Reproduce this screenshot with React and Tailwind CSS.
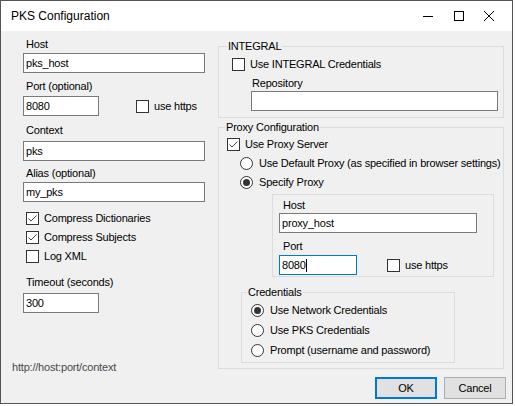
import React from 'react';

function Check({ checked }) {
  return (
    <span className="w-[13px] h-[13px] shrink-0 border border-[#333] bg-white flex items-center justify-center">
      {checked && (
        <svg width="11" height="11" viewBox="0 0 11 11">
          <path d="M1.5 5.5 L4 8 L9.5 2.5" stroke="#444" strokeWidth="1" fill="none" />
        </svg>
      )}
    </span>
  );
}

function Radio({ checked }) {
  return (
    <span className="w-[13px] h-[13px] shrink-0 rounded-full border border-[#333] bg-white flex items-center justify-center">
      {checked && <span className="w-[7px] h-[7px] rounded-full bg-[#333]" />}
    </span>
  );
}

function CheckRow({ label, checked, className = '' }) {
  return (
    <div className={`flex items-center gap-[5px] ${className}`}>
      <Check checked={checked} />
      <span className="whitespace-nowrap">{label}</span>
    </div>
  );
}

function RadioRow({ label, checked, className = '' }) {
  return (
    <div className={`flex items-center gap-[6px] ${className}`}>
      <Radio checked={checked} />
      <span className="whitespace-nowrap">{label}</span>
    </div>
  );
}

function Label({ children, className = '' }) {
  return <div className={`h-[13px] whitespace-nowrap ${className}`}>{children}</div>;
}

function TextBox({ children, className = '', focused }) {
  return (
    <div
      className={`h-[20px] shrink-0 bg-white pl-[2px] flex items-center border ${
        focused ? 'border-[#0078d7]' : 'border-[#7a7a7a]'
      } ${className}`}
    >
      {children}
      {focused && <span className="inline-block w-px h-[13px] bg-black" />}
    </div>
  );
}

function Group({ label, legend = '', className = '', children }) {
  return (
    <div className={`relative shrink-0 border border-[#dcdcdc] ${className}`}>
      {label && (
        <span className={`absolute -top-[7px] bg-[#f0f0f0] px-px leading-[13px] ${legend}`}>{label}</span>
      )}
      {children}
    </div>
  );
}

export default function App() {
  return (
    <div className="w-[515px] h-[406px] bg-white font-['Liberation_Sans',Arial,sans-serif] text-[11px] leading-[13px] text-black tracking-[-0.2px]">
      <div className="w-[513px] h-[404px] border border-[#555] flex flex-col">
        {/* Title bar */}
        <div className="h-[30px] shrink-0 bg-white flex items-center">
          <span className="pl-[10px] text-[12px] tracking-normal">PKS Configuration</span>
          <div className="ml-auto flex items-center pr-[18px]">
            <svg width="10" height="10" viewBox="0 0 10 10">
              <path d="M0 5.5 H10" stroke="#000" strokeWidth="1" />
            </svg>
            <svg width="10" height="10" viewBox="0 0 10 10" className="ml-[21px]">
              <rect x="0.5" y="0.5" width="9" height="9" stroke="#000" strokeWidth="1" fill="none" />
            </svg>
            <svg width="10" height="10" viewBox="0 0 10 10" className="ml-[20px]">
              <path d="M0 0 L10 10 M10 0 L0 10" stroke="#000" strokeWidth="1" />
            </svg>
          </div>
        </div>

        {/* Body */}
        <div className="flex-1 bg-[#f0f0f0] flex">
          {/* Left column */}
          <div className="w-[217px] shrink-0 pl-[22px] pt-[7px] flex flex-col">
            <Label className="ml-[3px]">Host</Label>
            <TextBox className="mt-[2px] w-[182px]">pks_host</TextBox>
            <Label className="ml-[3px] mt-[7px]">Port (optional)</Label>
            <div className="mt-[3px] flex items-center">
              <TextBox className="w-[76px]">8080</TextBox>
              <CheckRow className="ml-[37px]" label="use https" />
            </div>
            <Label className="ml-[3px] mt-[8px]">Context</Label>
            <TextBox className="mt-[4px] w-[182px]">pks</TextBox>
            <Label className="ml-[3px] mt-[6px]">Alias (optional)</Label>
            <TextBox className="mt-[2px] w-[182px]">my_pks</TextBox>
            <CheckRow className="ml-[3px] mt-[7px] h-[19px]" label="Compress Dictionaries" checked />
            <CheckRow className="ml-[3px] h-[19px]" label="Compress Subjects" checked />
            <CheckRow className="ml-[3px] h-[19px]" label="Log XML" />
            <Label className="ml-[3px] mt-[10px]">Timeout (seconds)</Label>
            <TextBox className="mt-[4px] w-[76px]">300</TextBox>
            <div className="-ml-[11px] mt-[48px] h-[13px] text-[#4a4a4a] whitespace-nowrap">http://host:port/context</div>
          </div>

          {/* Right column */}
          <div className="flex-1 flex flex-col">
            <Group label="INTEGRAL" legend="left-[8px]" className="mt-[15px] w-[286px] h-[72px] pt-[11px] pl-[13px]">
              <CheckRow label="Use INTEGRAL Credentials" className="h-[13px]" />
              <Label className="ml-[20px] mt-[6px]">Repository</Label>
              <TextBox className="ml-[19px] mt-[1px] w-[247px]" />
            </Group>

            <Group label="Proxy Configuration" legend="left-[6px]" className="mt-[9px] w-[286px] h-[242px] pt-[10px] pl-[8px] flex flex-col">
              <CheckRow label="Use Proxy Server" checked className="h-[13px]" />
              <RadioRow label="Use Default Proxy (as specified in browser settings)" className="ml-[13px] mt-[6px] h-[13px]" />
              <RadioRow label="Specify Proxy" checked className="ml-[13px] mt-[6px] h-[13px]" />

              <Group className="mt-[5px] ml-[45px] w-[222px] h-[83px] pt-[4px] pl-[6px] flex flex-col">
                <Label className="ml-[4px]">Host</Label>
                <TextBox className="mt-[1px] w-[198px]">proxy_host</TextBox>
                <Label className="ml-[4px] mt-[7px]">Port</Label>
                <div className="mt-[2px] flex items-center">
                  <TextBox focused className="w-[78px]">8080</TextBox>
                  <CheckRow className="ml-[30px]" label="use https" />
                </div>
              </Group>

              <Group label="Credentials" legend="left-[5px]" className="mt-[15px] ml-[14px] w-[214px] h-[71px] pt-[7px] pl-[9px] flex flex-col">
                <RadioRow label="Use Network Credentials" checked className="h-[20px]" />
                <RadioRow label="Use PKS Credentials" className="h-[20px]" />
                <RadioRow label="Prompt (username and password)" className="h-[20px]" />
              </Group>
            </Group>

            <div className="mt-[8px] flex justify-end gap-[7px] pr-[6px]">
              <button className="w-[62px] h-[22px] bg-[#e1e1e1] border-2 border-[#0078d7] flex items-center justify-center">
                OK
              </button>
              <button className="w-[62px] h-[22px] bg-[#e1e1e1] border border-[#adadad] flex items-center justify-center">
                Cancel
              </button>
            </div>
          </div>
        </div>
      </div>
    </div>
  );
}
